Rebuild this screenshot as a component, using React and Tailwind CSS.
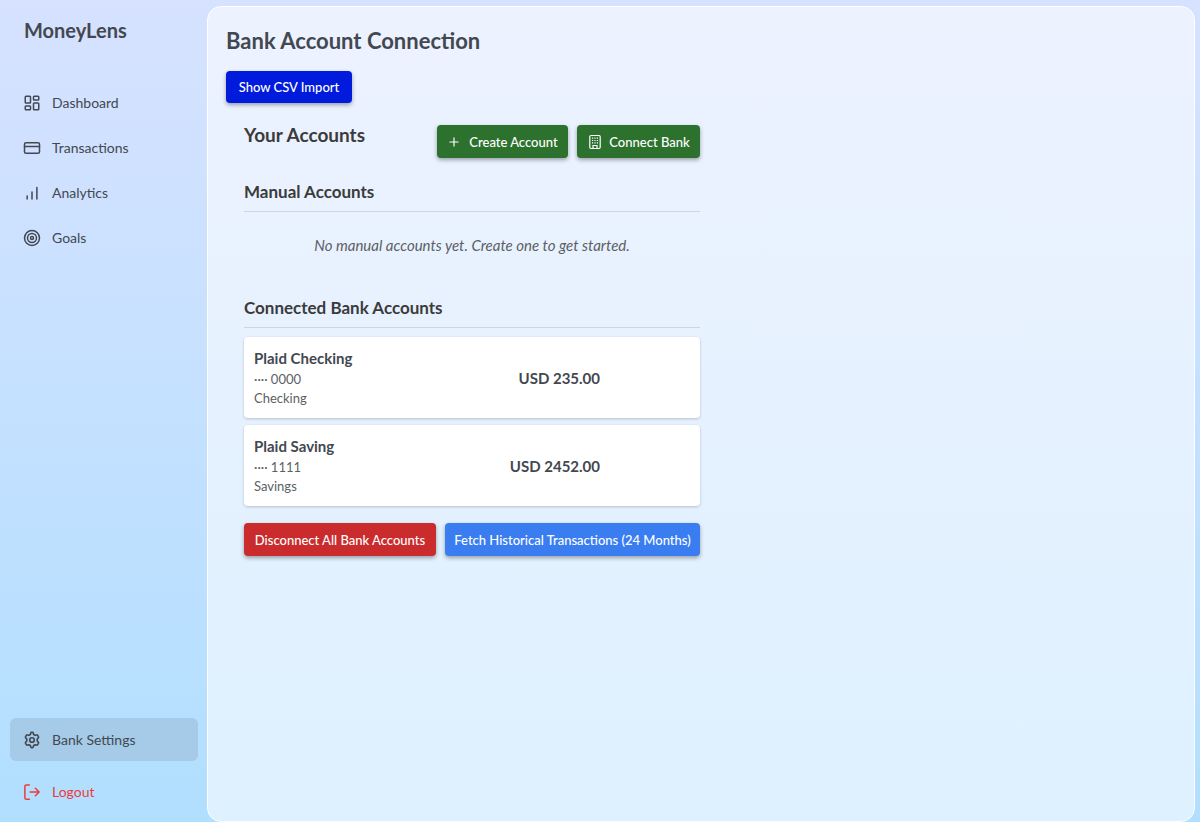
import { CreditCard, LayoutDashboard, Plus, Target } from "lucide-react";

const stroke = {
  fill: "none",
  stroke: "currentColor",
  strokeWidth: 2,
  strokeLinecap: "round",
  strokeLinejoin: "round",
  "aria-hidden": true,
};

function AnalyticsIcon() {
  return (
    <svg viewBox="0 0 24 24" className="size-[18px]" {...stroke}>
      <path d="M5.500 20v-4M12 20v-9.500M18.500 20V4.500" />
    </svg>
  );
}

function GearIcon() {
  return (
    <svg viewBox="1 1 22 22" className="size-[18px]" {...stroke}>
      <path d="M10.4 3.6c.2-.7.5-1 1.1-1h1c.6 0 .9.3 1.1 1l.4 1.7 1.8 1 1.7-.5c.6-.2 1.1 0 1.4.5l1 1.6c.3.6.2 1-.3 1.5L18.400 10.700v2.600l1.200 1.300c.5.5.6.9.3 1.500l-1 1.600c-.3.5-.8.7-1.400.5l-1.700-.5-1.800 1-.4 1.700c-.2.7-.5 1-1.100 1h-1c-.6 0-.9-.3-1.100-1l-.4-1.700-1.800-1-1.700.5c-.6.2-1.100 0-1.400-.5l-1-1.600c-.3-.6-.2-1 .3-1.500l1.200-1.300v-2.600L4.400 9.400c-.5-.5-.6-.9-.3-1.500l1-1.600c.3-.5.8-.7 1.400-.5l1.700.5 1.800-1z" />
      <circle cx="12" cy="12" r="2.8" />
    </svg>
  );
}

function LogoutIcon() {
  return (
    <svg viewBox="0 0 24 24" className="size-[18px]" {...stroke}>
      <path d="M8.500 2.500H4.500a2 2 0 0 0-2 2v15a2 2 0 0 0 2 2h4M9.500 12h12M16.500 7l5 5-5 5" />
    </svg>
  );
}

function BuildingIcon() {
  return (
    <svg viewBox="0 0 16 16" className="size-4" fill="none" stroke="currentColor" aria-hidden="true">
      <rect x="2.8" y="1.500" width="10.400" height="13" rx="1.200" strokeWidth="1.200" />
      <path d="M5 4.200h6.500M5 6.500h6.500M5 8.800h6.500" strokeWidth="1.200" strokeDasharray="1.200 1.200" />
      <path d="M6 14.500v-3h4v3" strokeWidth="1.200" />
    </svg>
  );
}

function NavLink({ icon, children, className }) {
  return (
    <a href="#" className={"flex h-[43px] items-center gap-[11px] rounded-md px-[13px] " + (className || "")}>
      {icon}
      {children}
    </a>
  );
}

function ActionButton({ className, children }) {
  return (
    <button
      type="button"
      className={
        "flex items-center justify-center rounded text-[13px] leading-5 font-medium text-white shadow-[0_2px_4px_rgba(0,0,0,0.35)] " +
        className
      }
    >
      {children}
    </button>
  );
}

const accounts = [
  { name: "Plaid Checking", mask: "0000", type: "Checking", balance: "USD 235.00" },
  { name: "Plaid Saving", mask: "1111", type: "Savings", balance: "USD 2452.00" },
];

export default function App() {
  return (
    <div className="flex min-h-screen bg-linear-to-b from-[#d6e2ff] to-[#b1dfff] pr-[5px] font-['Lato',sans-serif] text-sm text-[#434850]">
      <aside className="flex w-[207px] shrink-0 flex-col pt-4 pr-[9px] pb-[9px] pl-2.5">
        <p className="px-3.5 text-xl leading-7 font-bold">MoneyLens</p>
        <nav className="mt-[37px] flex grow flex-col gap-0.5">
          <NavLink icon={<LayoutDashboard className="size-[18px]" />}>Dashboard</NavLink>
          <NavLink icon={<CreditCard className="size-[18px]" />}>Transactions</NavLink>
          <NavLink icon={<AnalyticsIcon />}>Analytics</NavLink>
          <NavLink icon={<Target className="size-[18px]" />}>Goals</NavLink>
          <div className="mt-auto flex flex-col gap-[9px]">
            <NavLink icon={<GearIcon />} className="bg-[#a5cbe8]">Bank Settings</NavLink>
            <NavLink icon={<LogoutIcon />} className="text-[#f03a3a]">Logout</NavLink>
          </div>
        </nav>
      </aside>
      <main className="mt-1.5 grow rounded-[14px] border border-white bg-linear-to-b from-[#edf2ff] to-[#def1ff] px-[18px] pt-5">
        <h1 className="text-[22px] leading-7 font-bold">Bank Account Connection</h1>
        <ActionButton className="mt-4 h-8 w-[126px] bg-[#001bdc]">Show CSV Import</ActionButton>
        <section className="mt-[22px] max-w-[474px] pl-[18px] text-[#3b3b3b]">
          <div className="flex items-start justify-between">
            <h2 className="text-[19px] leading-5 font-bold">Your Accounts</h2>
            <div className="flex gap-[9px]">
              <ActionButton className="h-[33px] w-[131px] gap-2 bg-[#2c722e]">
                <Plus className="size-3.5" />
                Create Account
              </ActionButton>
              <ActionButton className="h-[33px] w-[123px] gap-1.5 bg-[#2c722e]">
                <BuildingIcon />
                Connect Bank
              </ActionButton>
            </div>
          </div>
          <h3 className="mt-6 border-b border-[#ced5df] pb-[9px] text-[17px] leading-5 font-bold">Manual Accounts</h3>
          <p className="mt-[21px] text-center text-[15px] leading-6 text-[#5c5f63] italic">
            No manual accounts yet. Create one to get started.
          </p>
          <h3 className="mt-[41px] border-b border-[#ced5df] pb-[9px] text-[17px] leading-5 font-bold">
            Connected Bank Accounts
          </h3>
          <ul className="mt-[9px] flex flex-col gap-[7px] text-[#434850]">
            {accounts.map((account) => (
              <li
                key={account.mask}
                className="flex items-center justify-between rounded bg-white py-2.5 pr-[100px] pl-2.5 shadow-[0_1px_3px_rgba(0,0,0,0.2)]"
              >
                <div className="pt-0.5 text-[13px] leading-[19px] text-[#5c5f63]">
                  <h4 className="mb-0.5 text-[15px] leading-[19px] font-bold text-[#434850]">{account.name}</h4>
                  <p>···· {account.mask}</p>
                  <p>{account.type}</p>
                </div>
                <p className="text-[15px] leading-5 font-bold">{account.balance}</p>
              </li>
            ))}
          </ul>
          <div className="mt-[17px] flex gap-[9px]">
            <ActionButton className="h-[33px] w-48 bg-[#ca2b2c]">Disconnect All Bank Accounts</ActionButton>
            <ActionButton className="h-[33px] grow bg-[#397df0]">Fetch Historical Transactions (24 Months)</ActionButton>
          </div>
        </section>
      </main>
    </div>
  );
}
